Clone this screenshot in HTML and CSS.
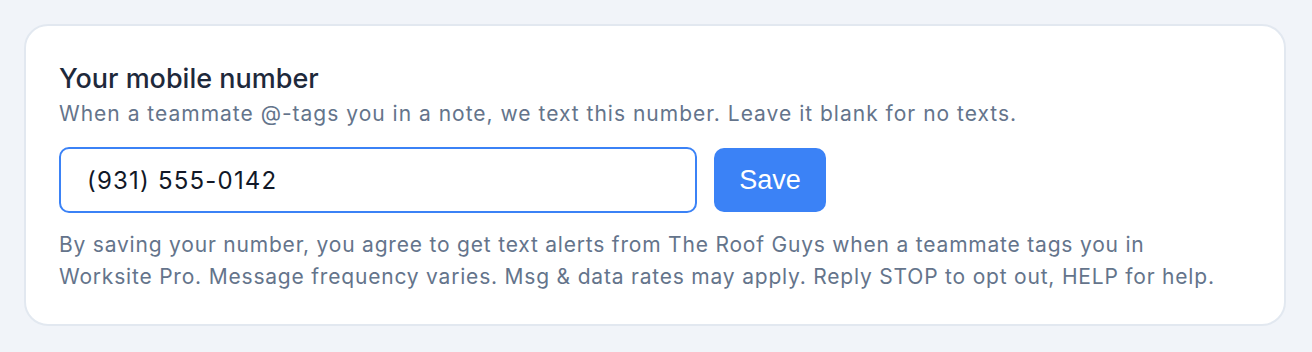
FILE: index.html
```html
<!DOCTYPE html>
<html lang="en">
<head>
    <meta charset="UTF-8">
    <title>Mobile number</title>
    <link rel="stylesheet" href="styles.css">
</head>
<body>

<div class="card">
    <h3 class="title">Your mobile number</h3>
    <p class="hint">When a teammate @-tags you in a note, we text this number. Leave it blank for no texts.</p>

    <div class="phone-row">
        <input type="tel" class="phone-input" value="(931) 555-0142">
        <button class="btn">Save</button>
    </div>

    <p class="consent">By saving your number, you agree to get text alerts from The Roof Guys when a teammate tags you in Worksite Pro. Message frequency varies. Msg &amp; data rates may apply. Reply STOP to opt out, HELP for help.</p>
</div>

</body>
</html>
```

FILE: styles.css
```css
body {
    font-family: 'Inter', 'Noto Sans', sans-serif;
    background-color: #f1f4f9;
    color: #1e293b;
    margin: 0;
    padding: 24px 26px 24px 24px;
}

.card {
    background: white;
    border: 2px solid #e2e8f0;
    border-radius: 24px;
    padding: 36px 33px 31px;
}

.title {
    font-size: 27px;
    font-weight: 500;
    line-height: 34px;
    margin: 0 0 4px;
    color: #1e293b;
}

.hint {
    font-size: 21px;
    line-height: 28px;
    letter-spacing: 1px;
    color: #64748b;
    margin: 0 0 19px;
}

.phone-row {
    display: flex;
    gap: 17px;
    align-items: center;
}

.phone-input {
    width: 638px;
    height: 66px;
    box-sizing: border-box;
    border: 2px solid #3b82f6;
    border-radius: 10px;
    padding: 0 26px;
    font-family: inherit;
    font-size: 24px;
    letter-spacing: 1.2px;
    color: #111827;
    outline: none;
}

.btn {
    width: 112px;
    height: 64px;
    background: #3b82f6;
    color: white;
    border: none;
    border-radius: 10px;
    font-family: 'Liberation Sans', Arial, sans-serif;
    font-size: 27px;
    cursor: pointer;
}

.consent {
    font-size: 21px;
    line-height: 32px;
    letter-spacing: 0.8px;
    color: #64748b;
    margin: 16px 0 0;
    max-width: 1175px;
}
```
